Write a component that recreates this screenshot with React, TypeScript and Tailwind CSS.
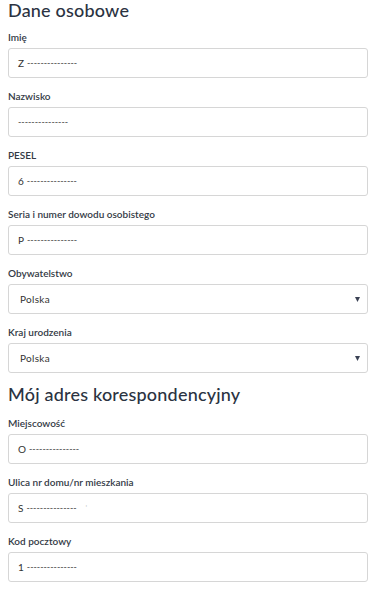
import React from "react";

const font = { fontFamily: "Lato, 'Open Sans', sans-serif" };

function Label({ children }: { children: React.ReactNode }) {
  return <div className="text-[10px] leading-[14px] font-semibold text-[#333a45] mb-[4px] h-[14px]">{children}</div>;
}

function Field({ label, prefix, extra }: { label: string; prefix?: string; extra?: boolean }) {
  return (
    <div className="mb-[11px]">
      <Label>{label}</Label>
      <div className="h-[30px] w-[360px] border border-[#d6d6d6] rounded-[3px] bg-white flex items-center pl-[9px] text-[10px] text-[#333]">
        {prefix && <span className="mr-[3px]">{prefix}</span>}
        <span className="text-[9px] text-[#444]">{dashes}</span>
        {extra && <span className="ml-[9px] text-[#c8c8c8] text-[8px]">'</span>}
      </div>
    </div>
  );
}

function SelectField({ label, value }: { label: string; value: string }) {
  return (
    <div className="mb-[11px]">
      <Label>{label}</Label>
      <div className="h-[30px] w-[360px] border border-[#d6d6d6] rounded-[3px] bg-white flex items-center justify-between pl-[11px] pr-[7px] text-[10px] text-[#333] tracking-[0.3px]">
        <span>{value}</span>
        <svg width="5" height="5" viewBox="0 0 5 5">
          <polygon points="0,0 5,0 2.5,5" fill="#3b4254" />
        </svg>
      </div>
    </div>
  );
}

const dashes = "---------------";

export default function App() {
  return (
    <div className="w-[390px] h-[595px] bg-white overflow-hidden" style={font}>
      <div className="ml-[8px] w-[360px]">
        <h2 className="text-[18px] leading-[20px] text-[#2b3342] font-medium tracking-[0.2px] mb-[10px]">Dane osobowe</h2>
        <Field label="Imię" prefix="Z" />
        <Field label="Nazwisko" />
        <Field label="PESEL" prefix="6" />
        <Field label="Seria i numer dowodu osobistego" prefix="P" />
        <SelectField label="Obywatelstwo" value="Polska" />
        <SelectField label="Kraj urodzenia" value="Polska" />
        <h2 className="text-[18px] leading-[22px] text-[#2b3342] font-medium tracking-[0.2px] mt-[-1px] mb-[11px]">Mój adres korespondencyjny</h2>
        <Field label="Miejscowość" prefix="O" />
        <Field label="Ulica nr domu/nr mieszkania" prefix="S" extra />
        <Field label="Kod pocztowy" prefix="1" />
      </div>
    </div>
  );
}
